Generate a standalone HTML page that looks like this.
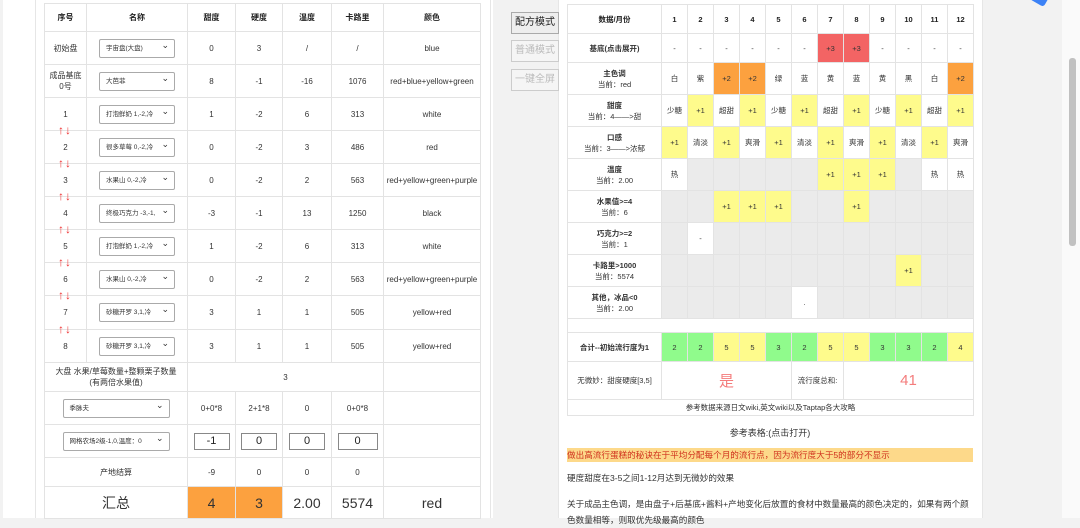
<!DOCTYPE html><html><head><meta charset="utf-8"><style>
*{box-sizing:border-box;margin:0;padding:0}
body{width:1080px;height:518px;overflow:hidden;background:#f2f2f2;font-family:"Liberation Sans","Noto Sans CJK SC",sans-serif;color:#333;position:relative}
.panel{position:absolute;background:#fff}
table{border-collapse:collapse;table-layout:fixed;position:absolute;font-size:8px;text-align:center}
td{border:1px solid #e3e3e3;vertical-align:middle;overflow:hidden;white-space:nowrap}
.h td{font-weight:bold;color:#222}
.sel{display:inline-block;width:76px;height:19px;border:1px solid #aaa;border-radius:2px;text-align:left;padding-left:6px;line-height:17px;font-size:6.5px;position:relative;background:#fff}
.sel:after{content:"⌄";position:absolute;right:5px;top:-3px;font-size:9px}
.ar{position:absolute;left:58px;color:#e33;font-size:12px;line-height:12px;letter-spacing:1px}
.inp{display:inline-block;width:36px;height:17px;border:1px solid #888;font-size:11px;line-height:15px;color:#222}
.btn{position:absolute;left:511px;width:48px;height:22px;border:1px solid #ccc;font-size:10px;line-height:20px;text-align:center;background:#f5f5f5;color:#bbb}
.y{background:#fefb8c}.o{background:#fca13f}.r{background:#f36464}.g{background:#ebebeb}.gr{background:#90fb8c}
#rt td{font-size:7.5px}
.b{font-weight:bold}
.tx{position:absolute;left:567px;font-size:8.6px}
</style></head><body>
<div class="panel" style="left:3px;top:0;width:490px;height:518px"></div>
<div style="position:absolute;left:35px;top:0;width:1px;height:518px;background:#e6e6e6"></div>
<div style="position:absolute;left:490px;top:0;width:1px;height:518px;background:#e6e6e6"></div>
<div class="panel" style="left:558px;top:0;width:425px;height:518px;border-left:1px solid #e6e6e6;border-right:1px solid #e6e6e6"></div>
<div class="panel" style="left:1062px;top:0;width:18px;height:518px;background:#fafafa"></div>
<div style="position:absolute;left:1069px;top:58px;width:7px;height:188px;background:#c1c1c1;border-radius:3px"></div>
<div style="position:absolute;left:1032px;top:-10px;width:16px;height:14px;background:#3c82f6;transform:rotate(30deg);border-radius:3px"></div>

<table style="left:44px;top:3px;width:436px">
<colgroup><col style="width:42px"><col style="width:101px"><col style="width:48px"><col style="width:47px"><col style="width:49px"><col style="width:52px"><col style="width:97px"></colgroup>
<tr class="h" style="height:28px"><td>序号</td><td>名称</td><td>甜度</td><td>硬度</td><td>温度</td><td>卡路里</td><td>颜色</td></tr>
<tr style="height:33px"><td>初始盘</td><td><span class="sel">宇宙盘(大盘)</span></td><td>0</td><td>3</td><td>/</td><td>/</td><td>blue</td></tr>
<tr style="height:33px"><td>成品基底<br>0号</td><td><span class="sel">大芭菲</span></td><td>8</td><td>-1</td><td>-16</td><td>1076</td><td>red+blue+yellow+green</td></tr>
<tr style="height:33px"><td>1</td><td><span class="sel">打泡鲜奶 1,-2,冷</span></td><td>1</td><td>-2</td><td>6</td><td>313</td><td>white</td></tr>
<tr style="height:33px"><td>2</td><td><span class="sel">很多草莓 0,-2,冷</span></td><td>0</td><td>-2</td><td>3</td><td>486</td><td>red</td></tr>
<tr style="height:33px"><td>3</td><td><span class="sel">水果山 0,-2,冷</span></td><td>0</td><td>-2</td><td>2</td><td>563</td><td>red+yellow+green+purple</td></tr>
<tr style="height:33px"><td>4</td><td><span class="sel">终极巧克力 -3,-1,</span></td><td>-3</td><td>-1</td><td>13</td><td>1250</td><td>black</td></tr>
<tr style="height:33px"><td>5</td><td><span class="sel">打泡鲜奶 1,-2,冷</span></td><td>1</td><td>-2</td><td>6</td><td>313</td><td>white</td></tr>
<tr style="height:33px;border-bottom:1.5px solid #111"><td>6</td><td><span class="sel">水果山 0,-2,冷</span></td><td>0</td><td>-2</td><td>2</td><td>563</td><td>red+yellow+green+purple</td></tr>
<tr style="height:34px"><td>7</td><td><span class="sel">砂糖开罗 3,1,冷</span></td><td>3</td><td>1</td><td>1</td><td>505</td><td>yellow+red</td></tr>
<tr style="height:33px;border-bottom:1.5px solid #f08080"><td>8</td><td><span class="sel">砂糖开罗 3,1,冷</span></td><td>3</td><td>1</td><td>1</td><td>505</td><td>yellow+red</td></tr>
<tr style="height:29px"><td colspan="2">大盘 水果/草莓数量+整颗栗子数量<br>(有两倍水果值)</td><td colspan="4">3</td><td></td></tr>
<tr style="height:33px"><td colspan="2"><span class="sel" style="width:107px">季脉夫</span></td><td>0+0*8</td><td>2+1*8</td><td>0</td><td>0+0*8</td><td></td></tr>
<tr style="height:33px"><td colspan="2"><span class="sel" style="width:107px">网格农场2级-1,0,温度：0</span></td><td><span class="inp">-1</span></td><td><span class="inp">0</span></td><td><span class="inp">0</span></td><td><span class="inp" style="width:40px">0</span></td><td></td></tr>
<tr style="height:29px"><td colspan="2">产地结算</td><td>-9</td><td>0</td><td>0</td><td>0</td><td></td></tr>
<tr style="height:32px;font-size:14px"><td colspan="2">汇总</td><td class="o">4</td><td class="o">3</td><td>2.00</td><td>5574</td><td>red</td></tr>
</table>
<div class="ar" style="top:124px">↑↓</div><div class="ar" style="top:157px">↑↓</div><div class="ar" style="top:190px">↑↓</div><div class="ar" style="top:223px">↑↓</div><div class="ar" style="top:256px">↑↓</div><div class="ar" style="top:289px">↑↓</div><div class="ar" style="top:323px">↑↓</div>

<div class="btn" style="top:12px;color:#222;background:#eee;border-color:#aaa">配方模式</div>
<div class="btn" style="top:40px">普通模式</div>
<div class="btn" style="top:69px">一键全屏</div>

<table id="rt" style="left:567px;top:4px;width:406px">
<colgroup><col style="width:94px"><col span="12" style="width:26px"></colgroup>
<tr class="h" style="height:29px"><td>数据/月份</td><td>1</td><td>2</td><td>3</td><td>4</td><td>5</td><td>6</td><td>7</td><td>8</td><td>9</td><td>10</td><td>11</td><td>12</td></tr>
<tr style="height:29px"><td class="b">基底(点击展开)</td><td>-</td><td>-</td><td>-</td><td>-</td><td>-</td><td>-</td><td class="r">+3</td><td class="r">+3</td><td>-</td><td>-</td><td>-</td><td>-</td></tr>
<tr style="height:32px"><td><b>主色调</b><br>当前：red</td><td>白</td><td>紫</td><td class="o">+2</td><td class="o">+2</td><td>绿</td><td>蓝</td><td>黄</td><td>蓝</td><td>黄</td><td>黑</td><td>白</td><td class="o">+2</td></tr>
<tr style="height:32px"><td><b>甜度</b><br>当前：4——&gt;甜</td><td>少糖</td><td class="y">+1</td><td>超甜</td><td class="y">+1</td><td>少糖</td><td class="y">+1</td><td>超甜</td><td class="y">+1</td><td>少糖</td><td class="y">+1</td><td>超甜</td><td class="y">+1</td></tr>
<tr style="height:32px"><td><b>口感</b><br>当前：3——&gt;浓郁</td><td class="y">+1</td><td>清淡</td><td class="y">+1</td><td>爽滑</td><td class="y">+1</td><td>清淡</td><td class="y">+1</td><td>爽滑</td><td class="y">+1</td><td>清淡</td><td class="y">+1</td><td>爽滑</td></tr>
<tr style="height:32px"><td><b>温度</b><br>当前：2.00</td><td>热</td><td class="g"></td><td class="g"></td><td class="g"></td><td class="g"></td><td class="g"></td><td class="y">+1</td><td class="y">+1</td><td class="y">+1</td><td class="g"></td><td>热</td><td>热</td></tr>
<tr style="height:32px"><td><b>水果值&gt;=4</b><br>当前：6</td><td class="g"></td><td class="g"></td><td class="y">+1</td><td class="y">+1</td><td class="y">+1</td><td class="g"></td><td class="g"></td><td class="y">+1</td><td class="g"></td><td class="g"></td><td class="g"></td><td class="g"></td></tr>
<tr style="height:32px"><td><b>巧克力&gt;=2</b><br>当前：1</td><td class="g"></td><td>-</td><td class="g"></td><td class="g"></td><td class="g"></td><td class="g"></td><td class="g"></td><td class="g"></td><td class="g"></td><td class="g"></td><td class="g"></td><td class="g"></td></tr>
<tr style="height:32px"><td><b>卡路里&gt;1000</b><br>当前：5574</td><td class="g"></td><td class="g"></td><td class="g"></td><td class="g"></td><td class="g"></td><td class="g"></td><td class="g"></td><td class="g"></td><td class="g"></td><td class="y">+1</td><td class="g"></td><td class="g"></td></tr>
<tr style="height:32px"><td><b>其他，冰品&lt;0</b><br>当前：2.00</td><td class="g"></td><td class="g"></td><td class="g"></td><td class="g"></td><td class="g"></td><td>.</td><td class="g"></td><td class="g"></td><td class="g"></td><td class="g"></td><td class="g"></td><td class="g"></td></tr>
<tr style="height:14px"><td colspan="13"></td></tr>
<tr style="height:29px"><td class="b">合计--初始流行度为1</td><td class="gr">2</td><td class="gr">2</td><td class="y">5</td><td class="y">5</td><td class="gr">3</td><td class="gr">2</td><td class="y">5</td><td class="y">5</td><td class="gr">3</td><td class="gr">3</td><td class="gr">2</td><td class="y">4</td></tr>
<tr style="height:38px"><td>无微妙：甜度硬度[3,5]</td><td colspan="5" style="font-size:15px;color:#f47c7c">是</td><td colspan="2">流行度总和:</td><td colspan="5" style="font-size:15px;color:#f47c7c">41</td></tr>
<tr style="height:16px"><td colspan="13">参考数据来源日文wiki,英文wiki以及Taptap各大攻略</td></tr>
</table>
<div class="tx" style="top:426px;width:406px;text-align:center;font-size:9px">参考表格:(点击打开)</div>
<div class="tx" style="top:448px;width:406px;height:14px;background:#fdd98a;color:#d0321e;line-height:14px">做出高流行蛋糕的秘诀在于平均分配每个月的流行点，因为流行度大于5的部分不显示</div>
<div class="tx" style="top:472px">硬度甜度在3-5之间1-12月达到无微妙的效果</div>
<div class="tx" style="top:496px;width:406px;line-height:16px">关于成品主色调，是由盘子+后基底+酱料+产地变化后放置的食材中数量最高的颜色决定的，如果有两个颜色数量相等，则取优先级最高的颜色</div>
</body></html>
